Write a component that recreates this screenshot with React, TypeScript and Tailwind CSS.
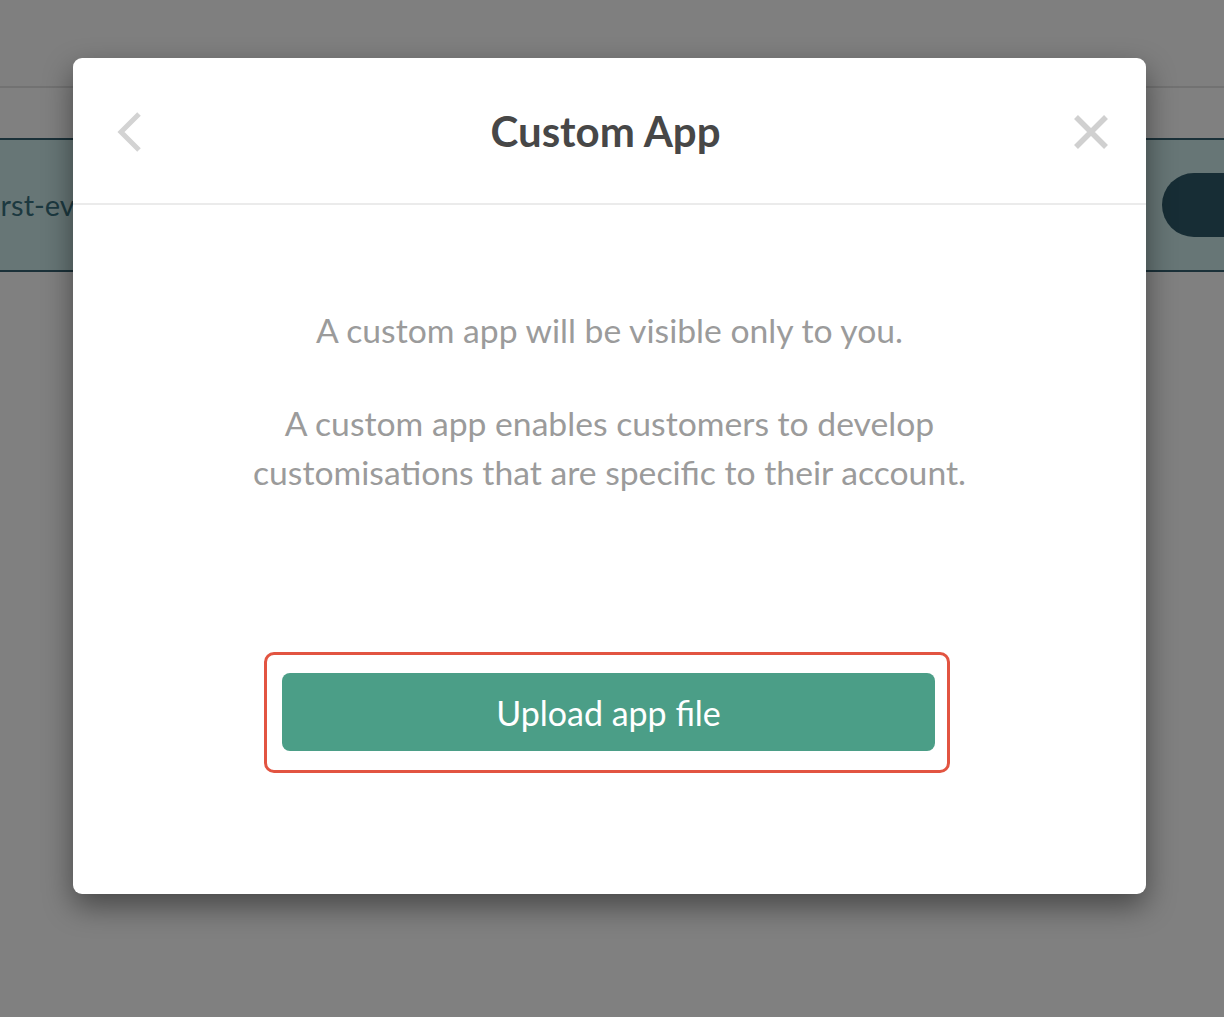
import React from "react";

export default function App() {
  return (
    <div
      className="relative w-[1224px] h-[1017px] overflow-hidden bg-[#808080]"
      style={{ fontFamily: "Lato, 'Noto Sans', sans-serif" }}
    >
      {/* background app (dimmed) */}
      <div className="h-[88px] border-b-2 border-[#727272] bg-[#7f7f7f]" />
      <div className="h-[50px]" />
      <div className="h-[134px] border-y-2 border-[#1b3139] bg-[#677676] flex items-center justify-between">
        <div className="ml-[-16px] text-[29px] text-[#1c3940]">first-event</div>
        <div className="w-[120px] h-[64px] rounded-full bg-[#172d35] mr-[-58px]" />
      </div>

      {/* modal */}
      <div className="absolute left-[73px] top-[58px] w-[1073px] h-[836px] rounded-[9px] bg-white shadow-[0_12px_30px_rgba(0,0,0,0.45)] flex flex-col">
        <div className="h-[147px] border-b-2 border-[#ebebeb] flex items-center justify-between px-[42px] relative">
          <svg width="28" height="44" viewBox="0 0 28 44" className="ml-[1px] mt-[6px]">
            <path d="M23 2 L5 20 L23 38" fill="none" stroke="#d3d3d3" strokeWidth="5" />
          </svg>
          <h1 className="text-[42px] font-bold text-[#474747] mt-[2px] ml-[-6px]">Custom App</h1>
          <svg width="36" height="36" viewBox="0 0 36 36" className="mr-[-5px] mt-[2px]">
            <path d="M3 3 L33 33 M33 3 L3 33" fill="none" stroke="#d0d0d0" strokeWidth="5.5" />
          </svg>
        </div>
        <div className="flex flex-col items-center text-center text-[#9b9b9b] text-[33.7px] leading-[49px]">
          <p className="mt-[101px]">A custom app will be visible only to you.</p>
          <p className="mt-[44px]">
            A custom app enables customers to develop
            <br />
            customisations that are specific to their account.
          </p>
          <div className="mt-[155px] mr-[5px] w-[686px] h-[121px] border-[3px] border-[#e25441] rounded-[10px] pl-[15px] pr-[12px] pt-[18px]">
            <button className="w-full h-[78px] rounded-[8px] bg-[#4b9e87] text-white text-[34px] flex items-center justify-center">
              Upload app file
            </button>
          </div>
        </div>
      </div>
    </div>
  );
}
